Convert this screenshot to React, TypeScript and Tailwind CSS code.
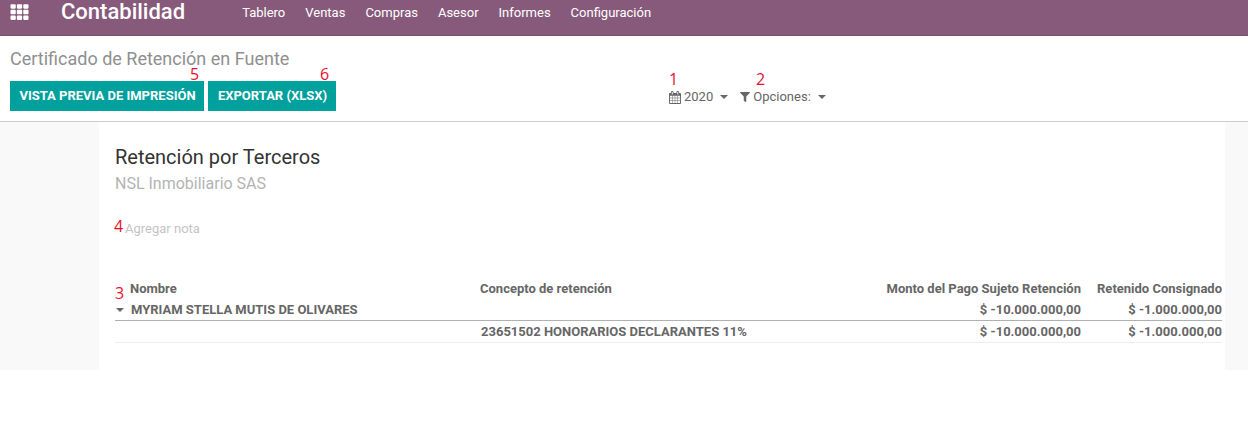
import { FaFilter, FaTh } from "react-icons/fa";

const menu = ["Tablero", "Ventas", "Compras", "Asesor", "Informes", "Configuración"];

const Caret = ({ className }: { className: string }) => (
  <span className={`inline-block w-0 h-0 border-x-[4px] border-x-transparent border-t-[4px] border-t-[#666] ${className}`} />
);

const Mark = ({ children, className }: { children: string; className: string }) => (
  <span className={`absolute text-[16px] leading-[18px] text-[#e8112d] font-['Open_Sans',sans-serif] ${className}`}>{children}</span>
);

const CalendarIcon = () => (
  <svg className="w-[12px] h-[13px]" viewBox="0 0 1664 1792" fill="currentColor">
    <path d="M128 1664h288v-288h-288v288zm352 0h320v-288h-320v288zm-352-352h288v-320h-288v320zm352 0h320v-320h-320v320zm-352-384h288v-288h-288v288zm736 736h320v-288h-320v288zm-384-736h320v-288h-320v288zm768 736h288v-288h-288v288zm-384-352h320v-320h-320v320zm-352-864v-288q0-13-9.5-22.5t-22.5-9.5h-64q-13 0-22.5 9.5t-9.5 22.5v288q0 13 9.5 22.5t22.5 9.5h64q13 0 22.5-9.5t9.5-22.5zm736 864h288v-320h-288v320zm-384-384h320v-288h-320v288zm384 0h288v-288h-288v288zm32-480v-288q0-13-9.5-22.5t-22.5-9.5h-64q-13 0-22.5 9.5t-9.5 22.5v288q0 13 9.5 22.5t22.5 9.5h64q13 0 22.5-9.5t9.5-22.5zm384-64v1280q0 52-38 90t-90 38h-1408q-52 0-90-38t-38-90v-1280q0-52 38-90t90-38h128v-96q0-66 47-113t113-47h64q66 0 113 47t47 113v96h384v-96q0-66 47-113t113-47h64q66 0 113 47t47 113v96h128q52 0 90 38t38 90z" />
  </svg>
);

const App = () => {
  return (
    <div className="relative w-[1248px] h-[428px] overflow-hidden bg-white font-['Roboto',sans-serif] text-[#666]">
      <header className="h-[36px] bg-[#875a7b] border-b border-[#7b5170] flex items-start text-white">
        <FaTh className="ml-[10px] mt-[3px] w-[19px] h-[18px]" />
        <span className="ml-[32px] text-[22px] leading-[24px] font-medium">Contabilidad</span>
        <nav className="ml-[57px] flex gap-[20px] text-[13px] leading-[26px] font-normal">
          {menu.map((item) => (
            <span key={item}>{item}</span>
          ))}
        </nav>
      </header>

      <section className="relative h-[86px] border-b border-[#ccc] px-[10px]">
        <h1 className="pt-[12px] text-[18px] leading-[22px] text-[#8f8f8f]">Certificado de Retención en Fuente</h1>
        <div className="mt-[11px] flex gap-[4px] text-[13px] font-bold text-white">
          <button className="h-[30px] w-[194px] pl-px bg-[#00a09d]">VISTA PREVIA DE IMPRESIÓN</button>
          <button className="h-[30px] w-[128px] pl-px bg-[#00a09d]">EXPORTAR (XLSX)</button>
        </div>
        <div className="absolute left-[669px] top-[51px] flex items-center text-[13px] leading-[20px]">
          <CalendarIcon />
          <span className="ml-[3px]">2020</span>
          <Caret className="ml-[7px]" />
          <FaFilter className="ml-[12px] w-[10px] h-[10px]" />
          <span className="ml-[3px]">Opciones:</span>
          <Caret className="ml-[7px]" />
        </div>
      </section>

      <main className="h-[248px] bg-[#f9f9f9] pl-[99px] pr-[23px]">
        <div className="h-full bg-white pl-[16px] pr-[3px] pt-[24px]">
          <h2 className="text-[20px] leading-[23px] text-[#333]">Retención por Terceros</h2>
          <p className="mt-[5px] text-[16px] leading-[20px] text-[#b3b3b3]">NSL Inmobiliario SAS</p>
          <p className="mt-[27px] ml-[10px] text-[13px] leading-[16px] text-[#c4c4c4]">Agregar nota</p>
          <div className="mt-[42px] text-[13px] font-bold text-[#666]">
            <div className="grid grid-cols-[365px_1fr_auto_141px] h-[20px] leading-[20px]">
              <span className="pl-[15px]">Nombre</span>
              <span>Concepto de retención</span>
              <span className="text-right">Monto del Pago Sujeto Retención</span>
              <span className="text-right">Retenido Consignado</span>
            </div>
            <div className="grid grid-cols-[365px_1fr_auto_141px] h-[22px] leading-[22px] border-b border-[#b0b0b0]">
              <span className="flex items-center whitespace-nowrap">
                <Caret className="ml-[1px] mr-[7px]" />
                MYRIAM STELLA MUTIS DE OLIVARES
              </span>
              <span />
              <span className="text-right">$ -10.000.000,00</span>
              <span className="text-right">$ -1.000.000,00</span>
            </div>
            <div className="grid grid-cols-[366px_1fr_auto_141px] h-[22px] leading-[22px] border-b border-[#eee]">
              <span />
              <span>23651502 HONORARIOS DECLARANTES 11%</span>
              <span className="text-right">$ -10.000.000,00</span>
              <span className="text-right">$ -1.000.000,00</span>
            </div>
          </div>
        </div>
      </main>

      <Mark className="left-[669px] top-[70px]">1</Mark>
      <Mark className="left-[756px] top-[70px]">2</Mark>
      <Mark className="left-[115px] top-[284px]">3</Mark>
      <Mark className="left-[114px] top-[217px]">4</Mark>
      <Mark className="left-[190px] top-[65px]">5</Mark>
      <Mark className="left-[320px] top-[65px]">6</Mark>
    </div>
  );
};

export default App;
